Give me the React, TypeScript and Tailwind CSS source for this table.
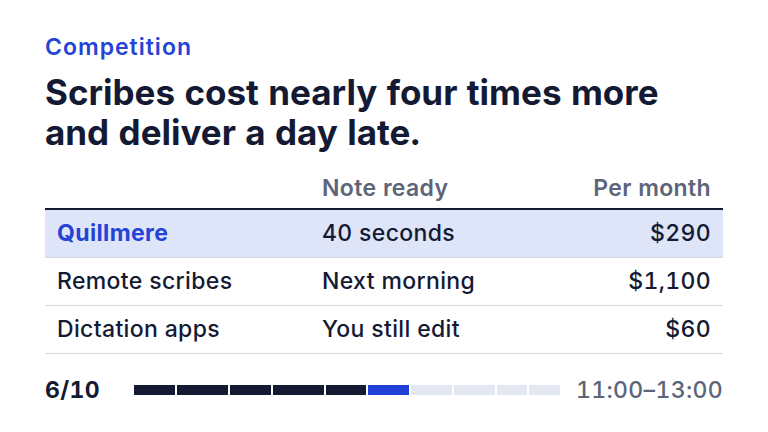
import React from "react";

const rows = [
  { name: "Quillmere", ready: "40 seconds", price: "$290", highlight: true },
  { name: "Remote scribes", ready: "Next morning", price: "$1,100" },
  { name: "Dictation apps", ready: "You still edit", price: "$60" },
];

const segs = [
  { w: "flex-[4]", c: "bg-[#141a33]" },
  { w: "flex-[5]", c: "bg-[#141a33]" },
  { w: "flex-[4]", c: "bg-[#141a33]" },
  { w: "flex-[5]", c: "bg-[#141a33]" },
  { w: "flex-[4]", c: "bg-[#141a33]" },
  { w: "flex-[4]", c: "bg-[#1f3fd6]" },
  { w: "flex-[4]", c: "bg-[#e3e7f1]" },
  { w: "flex-[4]", c: "bg-[#e3e7f1]" },
  { w: "flex-[3]", c: "bg-[#e3e7f1]" },
  { w: "flex-[3]", c: "bg-[#e3e7f1]" },
];

export default function App() {
  return (
    <div
      className="w-[768px] h-[432px] bg-white px-[45px] pt-[33px] text-[#141a33] overflow-hidden tabular-nums"
      style={{ fontFamily: "Inter, 'Noto Sans', sans-serif" }}
    >
      <div className="text-[23px] leading-[28px] font-semibold text-[#2544d6] tracking-[1px]">
        Competition
      </div>
      <h1 className="mt-[11px] text-[35px] leading-[40px] font-bold tracking-[0px] text-[#141a33]">
        Scribes cost nearly four times more
        <br />
        and deliver a day late.
      </h1>
      <div className="mt-[16px]">
        <div className="grid grid-cols-[265px_1fr_1fr] h-[42px] items-center border-b-2 border-[#141a33] text-[23px] font-semibold text-[#5d6579] tracking-[0.35px]">
          <div className="px-3"></div>
          <div className="px-3">Note ready</div>
          <div className="px-3 text-right">Per month</div>
        </div>
        {rows.map((r) => (
          <div
            key={r.name}
            className={`grid grid-cols-[265px_1fr_1fr] h-[48px] items-center border-b border-[#d6d9e0] text-[23px] tracking-[0.35px] ${
              r.highlight ? "bg-[#dfe5f8]" : ""
            }`}
          >
            <div
              className={`px-3 ${
                r.highlight ? "text-[#2544d6] font-bold" : "font-medium text-[#141a33]"
              }`}
            >
              {r.name}
            </div>
            <div className="px-3 font-medium">{r.ready}</div>
            <div className="px-3 text-right font-medium">{r.price}</div>
          </div>
        ))}
      </div>
      <div className="mt-[24px] flex items-center h-[24px]">
        <div className="w-[89px] text-[23px] font-bold text-[#141a33] tracking-[0.35px]">6/10</div>
        <div className="w-[426px] flex gap-[2px] h-[10px]">
          {segs.map((s, i) => (
            <div key={i} className={`${s.w} ${s.c} h-full`} />
          ))}
        </div>
        <div className="flex-1 text-right text-[23px] font-medium text-[#5d6579] tracking-[0.35px]">
          11:00–13:00
        </div>
      </div>
    </div>
  );
}
